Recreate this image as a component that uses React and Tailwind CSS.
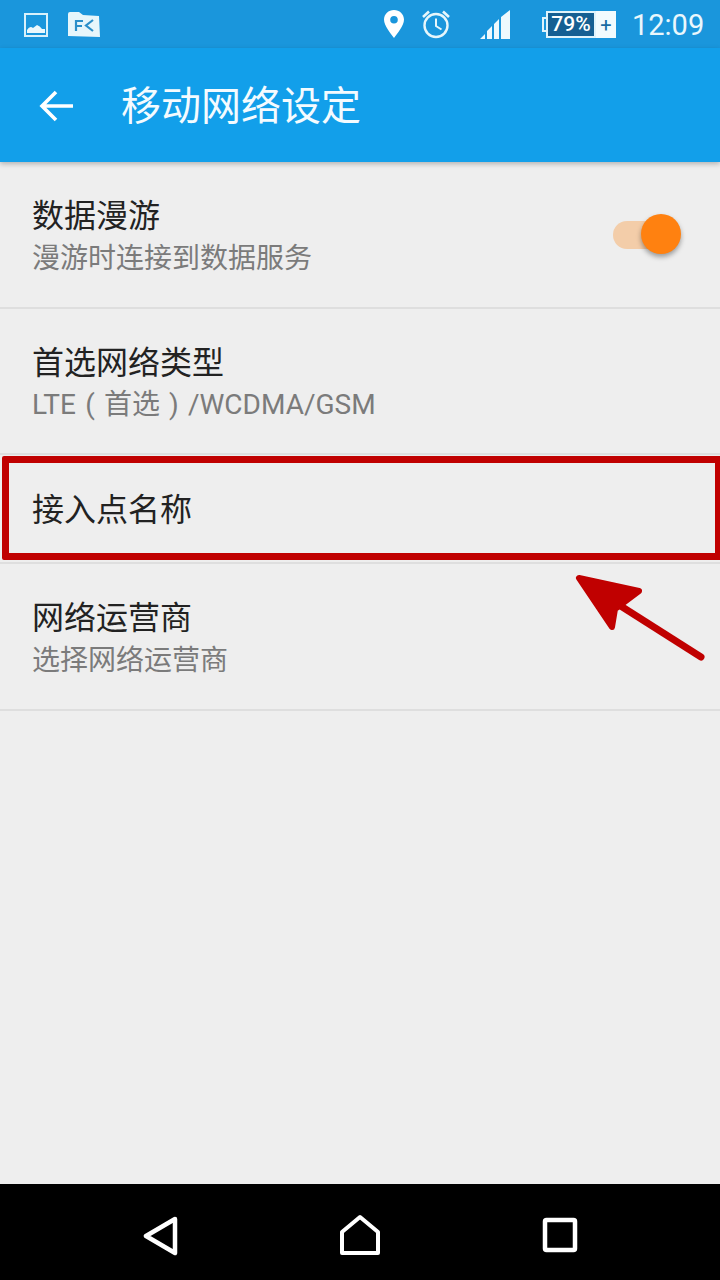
import React from "react";

const CJK = "font-['Roboto','Noto_Sans_CJK_SC',sans-serif]";

function Row({ title, sub, className = "", subClass = "mt-[1px]", children }) {
  return (
    <div className={`flex items-center justify-between border-b-2 border-[#dedede] pl-[32px] pr-[38px] ${className}`}>
      <div className="flex flex-col">
        <div className="text-[32px] leading-[44px] text-[#222222]">{title}</div>
        {sub && <div className={`text-[28px] leading-[39px] text-[#7b7b7b] ${subClass}`}>{sub}</div>}
      </div>
      {children}
    </div>
  );
}

function StatusBar() {
  return (
    <div className="flex h-12 items-center bg-[#1a96dc] pl-6 text-white">
      <svg width="24" height="24" viewBox="0 0 24 24" className="mt-0.5">
        <rect x="1" y="1" width="22" height="22" fill="none" stroke="#d8f1fb" strokeWidth="2" />
        <path d="M3 20 L3 17 Q6 12 9 15 L13 12 Q16 13 18 16 L21 16 L21 20 Z" fill="#eaf8fc" />
      </svg>
      <svg width="32" height="26" viewBox="0 0 32 26" className="ml-5 mt-0.5">
        <path d="M0 2 Q0 0 2 0 L11 0 L15 3 L31 4 L32 25 L0 24 Z" fill="#e6f6fb" />
        <path d="M8 19 V9 H15 M8 14 H14 M25 8 L18 13.5 L25 19" fill="none" stroke="#2a8fc9" strokeWidth="2.2" />
      </svg>
      <svg width="20" height="28" viewBox="0 0 20 28" className="ml-[284px]">
        <path fillRule="evenodd" d="M10 0 C4.5 0 0 4.2 0 9.6 C0 16 7 24 10 28 C13 24 20 16 20 9.6 C20 4.2 15.5 0 10 0 Z M10 6 A3.8 3.8 0 1 1 10 13.6 A3.8 3.8 0 1 1 10 6 Z" fill="#ffffff" />
      </svg>
      <svg width="30" height="30" viewBox="0 0 30 30" className="ml-[17px]">
        <circle cx="15" cy="16.5" r="11.5" fill="none" stroke="#e6f6fb" strokeWidth="2.4" />
        <path d="M15 9.5 V17 L20.5 20.5" fill="none" stroke="#e6f6fb" strokeWidth="2" />
        <path d="M2 8 L8 2.5 M28 8 L22 2.5" stroke="#e6f6fb" strokeWidth="2.6" fill="none" />
      </svg>
      <svg width="30" height="30" viewBox="0 0 30 30" className="ml-[29px] mt-[1px]">
        <path d="M0 29 L5 24 V29 Z M7 29 V21 L12 16 V29 Z M14 29 V14 L19 9 V29 Z M21 29 V7 L30 0 V29 Z" fill="#eef9fd" />
      </svg>
      <div className="ml-[32px] mt-[1px] flex h-[27px] items-stretch">
        <div className="mt-[6px] h-[15px] w-[4px] border-y-2 border-l-2 border-[#dff3fb]" />
        <div className="flex w-[50px] items-center justify-center border-2 border-[#dff3fb] bg-[#155f92] font-['Roboto',sans-serif] text-[21px] font-medium leading-none">
          79%
        </div>
        <div className="flex w-[20px] items-center justify-center bg-[#f2fbfe] text-[20px] leading-none text-[#1a6ca3]">+</div>
      </div>
      <div className="ml-[16px] mt-[3px] font-['Roboto',sans-serif] text-[29px] leading-none text-[#e9f7fc]">12:09</div>
    </div>
  );
}

function Header() {
  return (
    <div className="relative z-10 flex h-[114px] items-start bg-[#129fea] pl-[39px] pt-[35px] shadow-[0_2px_5px_rgba(0,0,0,0.25)]">
      <svg width="36" height="36" viewBox="0 0 36 36" className="mt-[5px]">
        <path d="M34 18 H4 M17 4 L3 18 L17 32" fill="none" stroke="#ffffff" strokeWidth="3.6" />
      </svg>
      <div className="ml-[46px] text-[40px] leading-[48px] text-[#f4fbff]">移动网络设定</div>
    </div>
  );
}

function Toggle() {
  return (
    <div className="relative -mt-[4px] h-[40px] w-[68px]">
      <div className="absolute left-0 top-[7px] h-[28px] w-[50px] rounded-full bg-[#f3cda9]" />
      <div className="absolute left-[28px] top-0 h-[40px] w-[40px] rounded-full bg-[#ff8110] shadow-[0_3px_5px_rgba(0,0,0,0.35)]" />
    </div>
  );
}

function NavBar() {
  return (
    <div className="flex h-24 items-start justify-between bg-black pl-[142px] pr-[142px] pt-[32px]">
      <svg width="38" height="40" viewBox="0 0 38 40">
        <path d="M33 3 L4 20 L33 37 Z" fill="none" stroke="#ffffff" strokeWidth="4.5" strokeLinejoin="round" />
      </svg>
      <svg width="42" height="42" viewBox="0 0 42 42" className="-mt-[2px] -ml-[2px]">
        <path d="M3 39 V18 L21 3 L39 18 V39 Z" fill="none" stroke="#ffffff" strokeWidth="4" strokeLinejoin="round" />
      </svg>
      <svg width="36" height="36" viewBox="0 0 36 36" className="mt-[1px]">
        <rect x="3" y="3" width="30" height="30" rx="1.5" fill="none" stroke="#ffffff" strokeWidth="4.5" />
      </svg>
    </div>
  );
}

function Paren({ children }) {
  return <span className="inline-block w-[28px] text-center">{children}</span>;
}

export default function App() {
  return (
    <div className={`relative flex h-[1280px] w-[720px] flex-col overflow-hidden bg-[#eeeeee] ${CJK}`}>
      <StatusBar />
      <Header />
      <div className="flex-1">
        <Row title="数据漫游" sub="漫游时连接到数据服务" className="h-[147px] pt-[2px] pr-[39px]">
          <Toggle />
        </Row>
        <Row
          title="首选网络类型"
          subClass="mt-0"
          sub={<>LTE<Paren>(</Paren>首选<Paren>)</Paren>/WCDMA/GSM</>}
          className="h-[146px] pt-[2px]"
        />
        <Row title="接入点名称" className="h-[109px] pt-[2px]" />
        <Row title="网络运营商" sub="选择网络运营商" className="h-[147px] pt-[2px]" />
      </div>
      <NavBar />

      <div className="absolute left-[2px] top-[456px] h-[104px] w-[720px] rounded-[2px] border-[7px] border-[#c00000]" />
      <svg className="absolute left-[570px] top-[570px]" width="140" height="96" viewBox="0 0 140 96">
        <path d="M9 8 L69 21 L45 39 L42 57 Z" fill="#c00000" stroke="#c00000" strokeWidth="6" strokeLinejoin="round" />
        <path d="M46 33 L131 87" fill="none" stroke="#c00000" strokeWidth="7" strokeLinecap="round" />
      </svg>
    </div>
  );
}
